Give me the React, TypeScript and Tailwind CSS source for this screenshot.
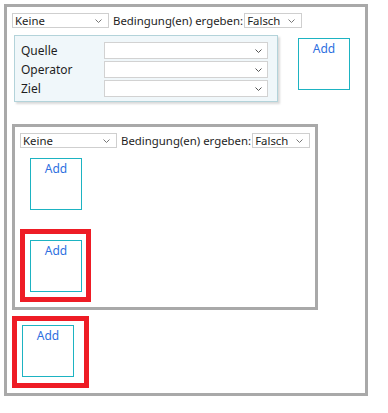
const font = { fontFamily: '"Noto Sans", "Open Sans", sans-serif' };

function Chevron({ className }: { className?: string }) {
  return (
    <svg width="7" height="4" viewBox="0 0 7 4" className={className}>
      <path d="M0.5 0.5 L3.5 3.5 L6.5 0.5" fill="none" stroke="currentColor" strokeWidth="1" />
    </svg>
  );
}

function SmallSelect({ value, width }: { value: string; width: string }) {
  return (
    <div className={`${width} h-[15px] border border-[#cfcfcf] bg-white flex items-center justify-between pl-[2px] pr-[6px]`}>
      <span className="text-[11.4px] leading-none text-[#1e1e1e]">{value}</span>
      <Chevron className="text-[#777]" />
    </div>
  );
}

function ConditionRow() {
  return (
    <div className="flex items-center">
      <SmallSelect value="Keine" width="w-[97px]" />
      <span className="ml-[4px] text-[11.4px] leading-none text-[#1e1e1e] whitespace-nowrap">Bedingung(en) ergeben:</span>
      <div className="ml-[1px]">
        <SmallSelect value="Falsch" width="w-[58px]" />
      </div>
    </div>
  );
}

function AddBox() {
  return (
    <div className="w-[52px] h-[52px] border border-[#1db3c2] bg-white flex justify-center">
      <span className="mt-[3px] text-[12px] leading-[14px] text-[#2e6fe0]">Add</span>
    </div>
  );
}

function FieldRow({ label }: { label: string }) {
  return (
    <div className="flex items-center h-[17px]">
      <span className="w-[89px] pl-[6px] text-[12px] leading-none text-[#1e1e1e]">{label}</span>
      <div className="w-[164px] h-[17px] border border-[#d2d2d2] bg-white flex items-center justify-end pr-[5px]">
        <Chevron className="text-[#555]" />
      </div>
    </div>
  );
}

export default function App() {
  return (
    <div className="w-[388px] h-[413px] bg-white pt-[4px] pl-[4px]" style={font}>
      <div className="w-[364px] h-[392px] border-[3px] border-[#a9a9a9] flex flex-col items-start">
        <div className="mt-[6px] ml-[5px]">
          <ConditionRow />
        </div>

        <div className="mt-[7px] ml-[7px] flex items-start">
          <div className="w-[264px] h-[67px] border border-[#b3d3da] bg-[#f0f7fa] shadow-[2px_2px_2px_rgba(0,0,0,0.15)] pt-[6px] flex flex-col gap-[2px]">
            <FieldRow label="Quelle" />
            <FieldRow label="Operator" />
            <FieldRow label="Ziel" />
          </div>
          <div className="ml-[20px] mt-[3px]">
            <AddBox />
          </div>
        </div>

        <div className="mt-[22px] ml-[5px] w-[306px] h-[186px] border-[3px] border-[#a9a9a9] flex flex-col items-start">
          <div className="mt-[6px] ml-[5px]">
            <ConditionRow />
          </div>
          <div className="mt-[10px] ml-[15px]">
            <AddBox />
          </div>
          <div className="mt-[19px] ml-[5px] border-[5px] border-[#ee1c25] pl-[5px] pr-[4px] pt-[6px] pb-[5px]">
            <AddBox />
          </div>
        </div>

        <div className="mt-[6px] ml-[5px] border-[5px] border-[#ee1c25] pl-[5px] pr-[10px] pt-[4px] pb-[6px]">
          <AddBox />
        </div>
      </div>
    </div>
  );
}
